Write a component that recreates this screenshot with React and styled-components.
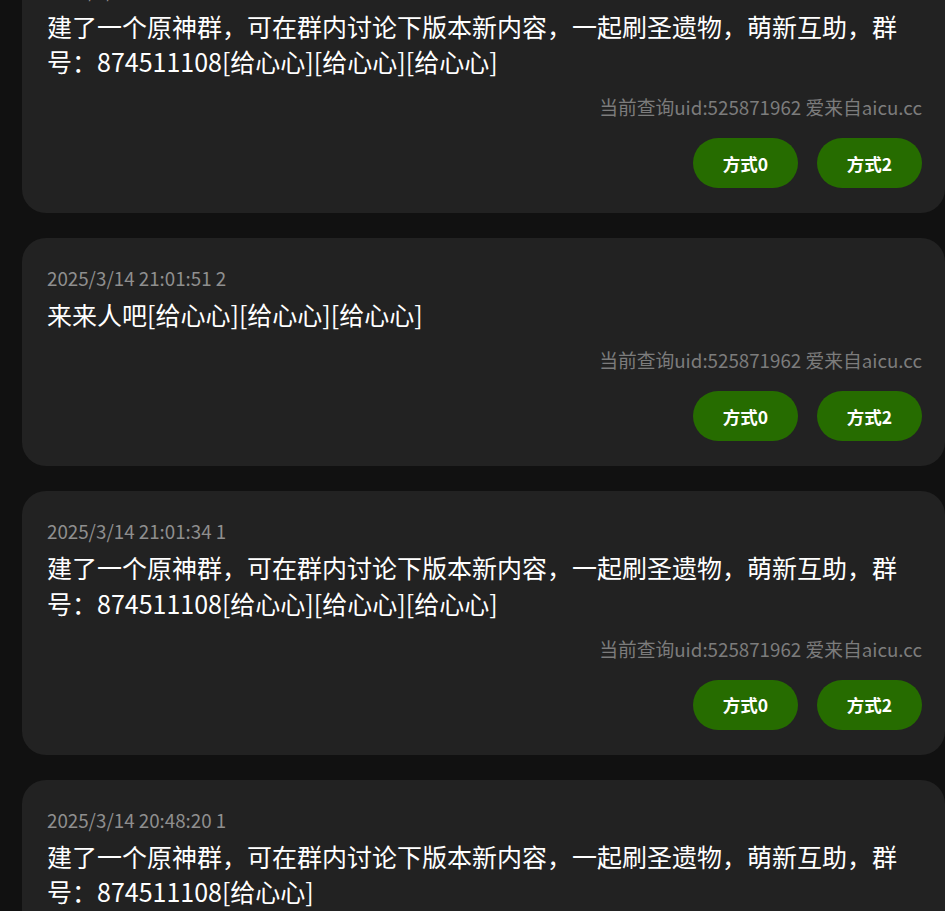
import React from 'react';
import styled, { createGlobalStyle } from 'styled-components';

const GlobalStyle = createGlobalStyle`
  html, body {
    margin: 0;
    padding: 0;
    background: #111111;
    font-family: "Noto Sans CJK SC", "Noto Sans", sans-serif;
  }
`;

const Page = styled.div`
  padding-left: 22px;
  overflow: hidden;
  height: 911px;
`;

const List = styled.div`
  display: flex;
  flex-direction: column;
  gap: 25px;
  margin-top: -50.5px;
`;

const Card = styled.div`
  background: #222222;
  border-radius: 24px;
  padding: 28px 23px 25px 25px;
  display: flex;
  flex-direction: column;
`;

const Time = styled.div`
  font-size: 18.75px;
  line-height: 24px;
  color: #8f8f8f;
`;

const Content = styled.div`
  margin-top: 7px;
  font-size: 25px;
  line-height: 35.5px;
  color: #ffffff;
`;

const Source = styled.div`
  margin-top: 15.5px;
  font-size: 18.75px;
  line-height: 24px;
  color: #7c7c7c;
  text-align: right;
`;

const Actions = styled.div`
  margin-top: 19px;
  display: flex;
  justify-content: flex-end;
  gap: 19px;
`;

const Button = styled.button`
  width: 105px;
  height: 50px;
  border: none;
  border-radius: 25px;
  background: #266c00;
  color: #ffffff;
  font-family: inherit;
  font-size: 17.5px;
  font-weight: 700;
  cursor: pointer;
`;

const text1 = '建了一个原神群，可在群内讨论下版本新内容，一起刷圣遗物，萌新互助，群号：874511108';

const comments = [
  { time: '2025/3/14 21:02:10 1', text: text1 + '[给心心][给心心][给心心]' },
  { time: '2025/3/14 21:01:51 2', text: '来来人吧[给心心][给心心][给心心]' },
  { time: '2025/3/14 21:01:34 1', text: text1 + '[给心心][给心心][给心心]' },
  { time: '2025/3/14 20:48:20 1', text: text1 + '[给心心]' },
];

const App = () => {
  return (
    <>
      <GlobalStyle />
      <Page>
        <List>
          {comments.map((c, i) => (
            <Card key={i}>
              <Time>{c.time}</Time>
              <Content>{c.text}</Content>
              <Source>当前查询uid:525871962 爱来自aicu.cc</Source>
              <Actions>
                <Button>方式0</Button>
                <Button>方式2</Button>
              </Actions>
            </Card>
          ))}
        </List>
      </Page>
    </>
  );
};

export default App;
